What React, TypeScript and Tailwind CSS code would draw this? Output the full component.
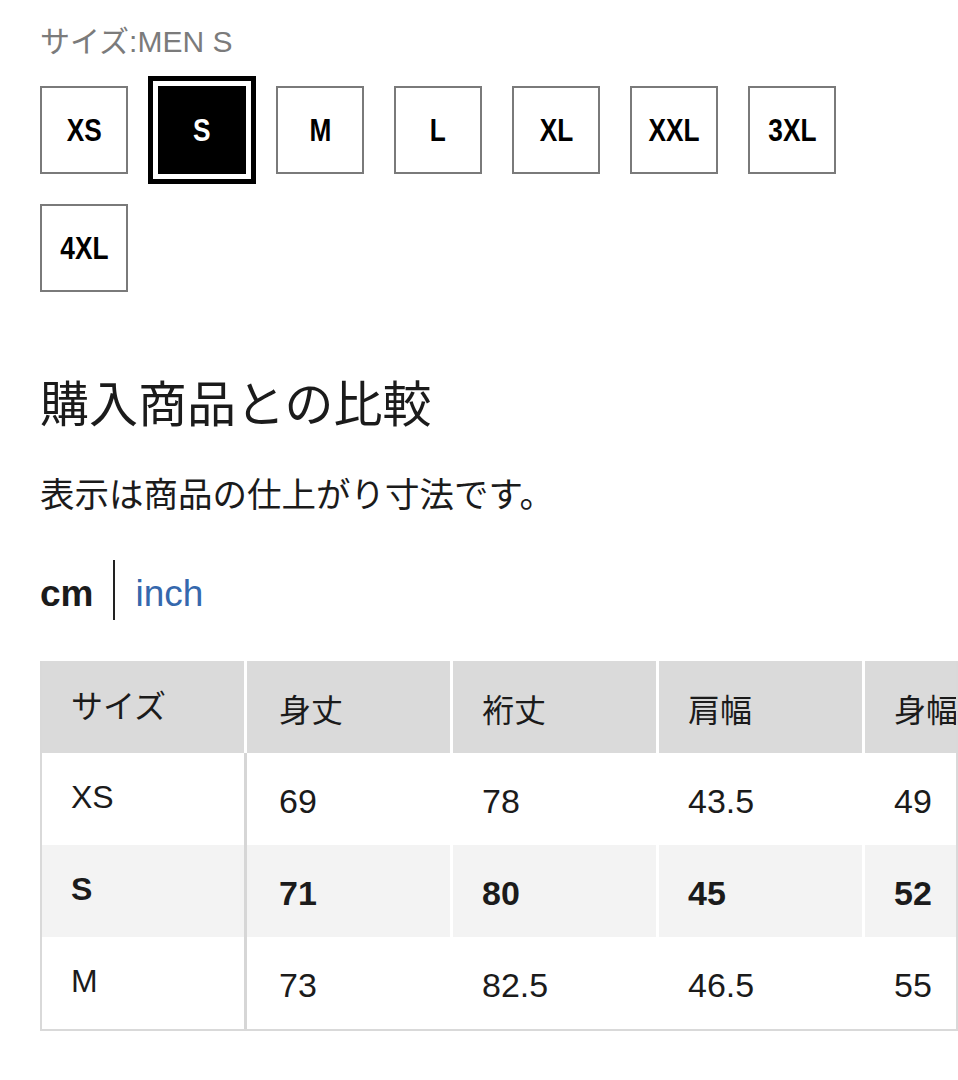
import React from "react";

const sizes = ["XS", "S", "M", "L", "XL", "XXL", "3XL", "4XL"];

const headers = ["サイズ", "身丈", "裄丈", "肩幅", "身幅"];

const rows = [
  { size: "XS", values: ["69", "78", "43.5", "49"], current: false },
  { size: "S", values: ["71", "80", "45", "52"], current: true },
  { size: "M", values: ["73", "82.5", "46.5", "55"], current: false },
];

const sans = "font-['Liberation_Sans','Noto_Sans_CJK_JP',sans-serif]";

export default function App() {
  const selected = "S";

  return (
    <div className={`min-h-[1080px] w-[958px] overflow-hidden bg-white pt-[22px] text-[#1b1b1b] ${sans}`}>
      <div className="pl-10">
        <p className="text-[30px] leading-[40px] text-[#7b7b7b]">サイズ:MEN S</p>

        {/* size picker */}
        <div className="mt-6 grid w-[560px] grid-cols-[repeat(7,88px)] gap-[30px]">
          {sizes.map((s) => (
            <button
              key={s}
              className={
                s === selected
                  ? "flex h-[88px] w-[88px] items-center justify-center bg-black text-white outline-5 outline-black outline-offset-5"
                  : "flex h-[88px] w-[88px] items-center justify-center border-2 border-[#7a7a7a] bg-white text-black"
              }
            >
              <span className="inline-block scale-x-[0.82] text-[32px] font-bold">
                {s}
              </span>
            </button>
          ))}
        </div>

        <h2 className="mt-[83px] text-[49px] font-normal leading-[60px]">購入商品との比較</h2>
        <p className="mt-9 text-[34.5px] leading-[48px]">表示は商品の仕上がり寸法です。</p>

        {/* unit switch */}
        <div className="mt-[41px] flex h-[60px] items-center">
          <span className="pt-2 text-[37px] font-bold">cm</span>
          <span className="mx-5 h-[60px] w-[2px] bg-[#222]" />
          <span className="pt-2 text-[37px] text-[#3568ad]">inch</span>
        </div>
      </div>

      {/* size table */}
      <div className="mt-[41px] ml-10 w-[918px] overflow-hidden border-x-2 border-b-2 border-[#d9d9d9]">
        <table className="w-[1029px] table-fixed border-separate border-spacing-0">
          <colgroup>
            <col className="w-[205px]" />
            <col className="w-[206px]" />
            <col className="w-[206px]" />
            <col className="w-[206px]" />
            <col className="w-[206px]" />
          </colgroup>
          <thead>
            <tr>
              {headers.map((h, i) => (
                <th
                  key={h}
                  className={
                    i === 0
                      ? "h-[92px] border-r-[3px] border-white bg-[#dadada] pr-4 pl-[29px] pb-0 text-left align-middle text-[32px] font-normal"
                      : i === 1
                        ? "h-[92px] border-r-[3px] border-white bg-[#dadada] pr-4 pl-8 pt-2 text-left align-middle text-[32px] font-normal"
                        : "h-[92px] border-r-[3px] border-white bg-[#dadada] pr-4 pl-[29px] pt-2 text-left align-middle text-[32px] font-normal"
                  }
                >
                  {h}
                </th>
              ))}
            </tr>
          </thead>
          <tbody>
            {rows.map((r) => (
              <tr key={r.size} className={r.current ? "bg-[#f3f3f3] font-bold" : "bg-white"}>
                <td className="h-[92px] border-r-[3px] border-[#d6d6d6] pr-4 pl-[29px] pb-1 align-middle text-[32px]">
                  {r.size}
                </td>
                {r.values.map((v, i) => (
                  <td
                    key={i}
                    className={
                      i === 0
                        ? "h-[92px] border-r-[3px] border-white pr-4 pl-8 pt-1 align-middle text-[34px]"
                        : "h-[92px] border-r-[3px] border-white pr-4 pl-[29px] pt-1 align-middle text-[34px]"
                    }
                  >
                    {v}
                  </td>
                ))}
              </tr>
            ))}
          </tbody>
        </table>
      </div>
    </div>
  );
}
